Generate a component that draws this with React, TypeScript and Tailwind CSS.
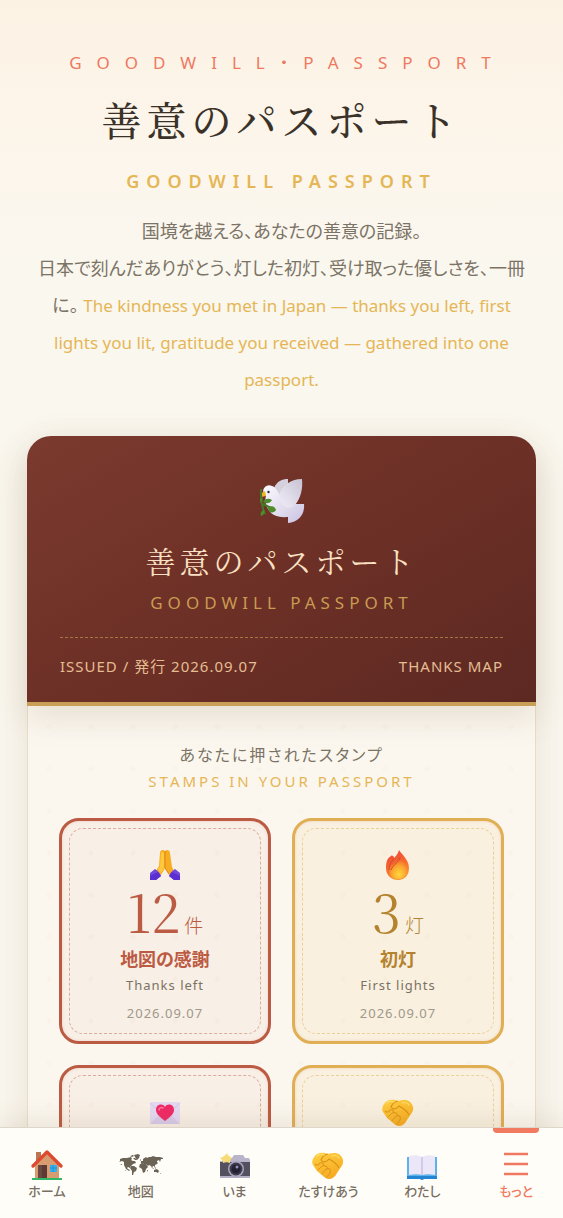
import type { ReactNode } from "react";
import clsx from "clsx";

const SANS = "font-['Noto_Sans','Noto_Sans_CJK_JP',sans-serif]";
const SERIF = "font-['Noto_Serif_CJK_JP','Liberation_Serif','Noto_Sans_CJK_JP',serif]";

function DoveIcon({ className }: { className: string }) {
  return (
    <svg viewBox="0 0 46 46" className={className} aria-hidden="true">
      <defs>
        <linearGradient id="dove-body" x1="0" y1="0" x2="1" y2="1">
          <stop offset="0" stopColor="#fbfaff" />
          <stop offset="0.6" stopColor="#dfdaec" />
          <stop offset="1" stopColor="#c9c0e4" />
        </linearGradient>
        <linearGradient id="dove-wing" x1="1" y1="0" x2="0" y2="1">
          <stop offset="0" stopColor="#c8c2d2" />
          <stop offset="1" stopColor="#f1eef8" />
        </linearGradient>
      </defs>
      <path d="M15 10C18 3 23 1 29 1v14L18 20Z" fill="#d5d0dc" />
      <path d="M4 13C5 8 9 6 13 8c4 1 5 5 8 9l16 9h8c1 10-5 18-16 19v-6c-12 1-18-3-21-10-2-5-2-8-1-11Z" fill="url(#dove-body)" />
      <path d="M20 17C23 8 31 1 43 1c1 9-1 19-7 26-3 4-8 3-12 0Z" fill="url(#dove-wing)" />
      <path d="M1 16l5-3 1 5-5 1Z" fill="#f2b327" />
      <circle cx="9.500" cy="14" r="1.200" fill="#332b2b" />
      <path d="M2 11v7c0 6 1 11 4 18M4 26l8 4" fill="none" stroke="#477827" strokeWidth="2" />
      <path d="M4 24c2-4 6-4 9-2-2 4-6 4-9 2Zm5 6c3-3 7-2 8 2-2 4-8 3-8-2Zm-4 2c-3 1-4 3-3 6 3-1 4-3 3-6ZM3 19c-2 1-3 3-1 6 2-2 2-4 1-6Z" fill="#4f8c2d" />
    </svg>
  );
}

function PrayIcon({ className }: { className: string }) {
  return (
    <svg viewBox="0 0 32 32" className={className} aria-hidden="true">
      <path d="M11 4c0-3 3-4 5-2 2-2 5-1 5 2l2 14 2 4-5 4-4-7-4 7-5-4 3-5Z" fill="#f7ad22" />
      <path d="M12 5c0-2 2-3 3-1v15l-3 5-3-3 2-4Z" fill="#ffc83d" />
      <path d="M16 2v17l4 6" fill="none" stroke="#de8517" />
      <path d="M6 20c3 2 5 4 6 7l-5 4H1v-7Z" fill="#7049dc" />
      <path d="M26 20c-3 2-5 4-6 7l5 4h6v-7Z" fill="#7049dc" />
      <path d="M1 27l8-4 3 4-5 4H1Zm30 0l-8-4-3 4 5 4h6Z" fill="#5b2fd0" />
    </svg>
  );
}

function FlameIcon({ className }: { className: string }) {
  return (
    <svg viewBox="0 0 32 32" className={className} aria-hidden="true">
      <defs>
        <linearGradient id="flame-outer" x1="0" y1="0" x2="0.4" y2="1">
          <stop offset="0" stopColor="#f0393d" />
          <stop offset="0.6" stopColor="#f66b2d" />
          <stop offset="1" stopColor="#fb932d" />
        </linearGradient>
        <radialGradient id="flame-core" cx="0.55" cy="0.8" r="0.7">
          <stop offset="0" stopColor="#ffd83c" />
          <stop offset="0.6" stopColor="#fba12e" />
          <stop offset="1" stopColor="#f26430" />
        </radialGradient>
      </defs>
      <path d="M17 1c2 4 10 9 10 18 0 8-5 12-11 12S4 27 4 19c0-5 1-10 5-12 1-1 3 0 3 2 2-2 4-4 5-8Z" fill="url(#flame-outer)" />
      <path d="M18 8c1 4 7 6 7 13 0 6-4 9-9 9s-9-3-9-8c0-6 8-7 11-14Z" fill="url(#flame-core)" />
      <path d="M12 9c-1 3-5 5-5 12M18 8c0 5-7 7-9 13" fill="none" stroke="#cf4a2b" />
    </svg>
  );
}

function LoveLetterIcon({ className }: { className: string }) {
  return (
    <svg viewBox="0 0 32 32" className={className} aria-hidden="true">
      <rect x="1" y="6" width="30" height="22" rx="1.500" fill="#e3d9f1" />
      <path d="M1 28l12-12h6l12 12Z" fill="#d8cbea" />
      <path d="M1 7l12 11h6L31 7" fill="none" stroke="#d5c9e6" />
      <path d="M16 25C11 21 7 18 7 14c0-6 7-7 9-3 2-4 9-3 9 3 0 4-4 7-9 11Z" fill="#f02a66" />
      <path d="M10 14c0-2 2-3 4-2" fill="none" stroke="#ff77a0" strokeWidth="1.500" strokeLinecap="round" />
    </svg>
  );
}

function HandshakeIcon({ className }: { className: string }) {
  return (
    <svg viewBox="0 0 32 32" className={className} aria-hidden="true">
      <defs>
        <linearGradient id="shake" x1="0" y1="0" x2="0.5" y2="1">
          <stop offset="0" stopColor="#ffd044" />
          <stop offset="1" stopColor="#f6ab22" />
        </linearGradient>
      </defs>
      <path d="M5 5c4-2 8-1 11 0 4-1 9-2 12 1 4 4 4 8 1 12l-4 6c-2 4-5 6-8 6s-5-2-7-4l-5-4-4-6C-1 13 1 8 5 5Z" fill="url(#shake)" />
      <path d="M16 5c-4 1-6 3-7 6 2 3 6 2 8-1 4 2 8 5 10 9" fill="none" stroke="#dc9118" strokeWidth="1.200" />
      <path d="M3 15c2 2 4 1 5-1 3-1 4 1 3 3 3-1 5 1 4 3 3-1 4 1 3 4" fill="none" stroke="#e39a1c" strokeWidth="1.200" />
      <path d="M6 21l4-4M10 25l4-5M15 28l3-4" stroke="#e0951a" strokeLinecap="round" />
      <path d="M5 7c2-2 5-2 7-1M20 7c3-1 6 0 7 2" fill="none" stroke="#ffe06a" strokeWidth="1.200" strokeLinecap="round" />
    </svg>
  );
}

function HouseIcon({ className }: { className: string }) {
  return (
    <svg viewBox="0 0 32 32" className={className} aria-hidden="true">
      <path d="M5 3h5v10H5Z" fill="#b97852" />
      <path d="M4 15L16 4l12 11v15H4Z" fill="#d79d70" />
      <path d="M7 16h9v13H7Z" fill="#6d4841" />
      <path d="M11 16h5v13h-5Z" fill="#5b3a36" />
      <path d="M19 16h7v7h-7Z" fill="#35aff0" />
      <path d="M22 16v7M19 19h7" stroke="#208fd4" />
      <path d="M2 17L16 3l14 14" fill="none" stroke="#dd4931" strokeWidth="3.200" strokeLinecap="round" strokeLinejoin="round" />
      <path d="M1 29h30v2H1Z" fill="#31b768" />
    </svg>
  );
}

function WorldMapIcon({ className }: { className: string }) {
  return (
    <svg viewBox="0 0 44 22" className={className} aria-hidden="true">
      <g fill="#6b6456">
        <path d="M1 5l3-1 4 0 4-1 1 2-1 1 2 1 2 0 1 2-3 1-2 2-1 1 0 1-2-1-1 1 1 1 2 1-1 1-3-2-2-4 0-3-2-1-3 1 1-1Z" />
        <path d="M11 2l3-1 1 1-2 1ZM14 4l2 0 2 2-2 0ZM15 1l4-1 2 1-1 3-2 2-2-3Z" />
        <path d="M12 12l3 0 3 2-1 3-2 1-1 3-1 0 0-4-2-3Z" />
        <path d="M22 8l0-1 2 0 0-2 3-2 1 1 2-1 2 0 2-1 3 1 4 0 3 1 0 1-2 0-1 3-1-2-2 1 0 3-2 1 0 3-1-2-1 0-1 2-1-2-2-1-1 1-2-2-2 0 0-1-2 1-1-1Z" />
        <path d="M21 10l3-1 3 1 2 3-2 2-1 3-2 1-1-4-3-2Z" />
        <path d="M35 16l3-1 2 2-1 2-2-1-2 0ZM33 13l2 2-1 0ZM36 13l1 1-1 1ZM41 19l1 1-1 0ZM28 16l1 0-1 2ZM38 8l1 1-1 1ZM21 5l1 1-1 1ZM1 10l2 0 0 1ZM6 16l1 0 0 1Z" />
      </g>
    </svg>
  );
}

function CameraIcon({ className }: { className: string }) {
  return (
    <svg viewBox="0 0 32 32" className={className} aria-hidden="true">
      <path d="M1 12h2l3-3h7l2-3h9l2 3h4l1 2v4H1Z" fill="#b9b4c9" />
      <path d="M1 13h30v15H1Z" fill="#535160" />
      <path d="M1 27h30v2H1Z" fill="#b4afc5" />
      <circle cx="17" cy="20" r="8" fill="#aaa5bd" />
      <circle cx="17" cy="20" r="6.500" fill="#3e3b4c" />
      <circle cx="17" cy="20" r="4.500" fill="#242233" />
      <circle cx="18" cy="18" r="1.500" fill="#9690b8" />
      <path d="M8 4c1 3 2 3 5 5-2 2-2 3-2 5-3-1-4-1-7 0 0-3-1-3-3-5 3-1 5-2 7-5Z" fill="#f7db78" />
    </svg>
  );
}

function BookIcon({ className }: { className: string }) {
  return (
    <svg viewBox="0 0 32 32" className={className} aria-hidden="true">
      <path d="M1 8h30v22H18l-2 1-2-1H1Z" fill="#5bb2ec" />
      <path d="M1 27h30v3H18l-2 1-2-1H1Z" fill="#2486d2" />
      <path d="M3 7c5-1 9-1 13 1 4-2 8-2 13-1v19c-5-1-9-1-13 0-4-1-8-1-13 0Z" fill="#ebe6f8" />
      <path d="M15 8h2v18h-2Z" fill="#d3c9e8" />
    </svg>
  );
}

function MenuIcon({ className }: { className: string }) {
  return (
    <svg viewBox="0 0 32 32" className={className} aria-hidden="true">
      <path d="M4 5h24M4 15h24M4 25h24" stroke="#ee7860" strokeWidth="2.500" />
    </svg>
  );
}

type StampProps = {
  tone: "red" | "gold";
  icon: ReactNode;
  count?: string;
  unit?: string;
  label?: string;
  english?: string;
  date?: string;
};

function Stamp({ tone, icon, count, unit, label, english, date }: StampProps) {
  const red = tone === "red";
  return (
    <article
      className={clsx(
        "h-[226px] rounded-[20px] border-[3px] p-[7px] shadow-[inset_0_0_3px_#e9a58a66]",
        red ? "border-[#bc5b43] bg-[#c060480d]" : "border-[#e0af54] bg-[#e5b44d17]",
      )}
    >
      <div
        className={clsx(
          "flex h-full flex-col items-center rounded-[14px] border border-dashed pt-5",
          red ? "border-[#bc5b4373] text-[#bc5b43]" : "border-[#e0af5480] text-[#b5832f]",
        )}
      >
        {icon}
        {count ? (
          <p className="flex h-[62px] items-baseline gap-1">
            <span className={clsx(SERIF, "text-[52px] leading-[60px]")}>{count}</span>
            <span className="text-[19px] font-light leading-none">{unit}</span>
          </p>
        ) : null}
        <h3 className="mt-1 text-[18px] font-bold leading-6">{label}</h3>
        <p className="mt-1 text-[13px] leading-5 tracking-[1px] text-[#7b7263]">{english}</p>
        <p className="mt-2 text-[13px] leading-5 tracking-[1px] text-[#a0988a]">{date}</p>
      </div>
    </article>
  );
}

const navItems = [
  { label: "ホーム", icon: <HouseIcon className="size-8" /> },
  { label: "地図", icon: <WorldMapIcon className="h-8 w-11" /> },
  { label: "いま", icon: <CameraIcon className="size-8" /> },
  { label: "たすけあう", icon: <HandshakeIcon className="size-8" /> },
  { label: "わたし", icon: <BookIcon className="size-8" /> },
  { label: "もっと", icon: <MenuIcon className="size-8" />, active: true },
];

export default function App() {
  return (
    <div
      lang="ja"
      className={clsx(
        SANS,
        "flex h-screen flex-col bg-[#faf7ef] text-[#7b7365] [font-feature-settings:'palt']",
      )}
    >
      <main className="min-h-0 flex-1 overflow-y-auto bg-[linear-gradient(180deg,#fcf2e4_0,#fdf5ea_120px,#faf7ef_260px)] px-[27px] pt-[51px] [scrollbar-width:none]">
        <header className="text-center">
          <p className="whitespace-nowrap pl-3 text-[17px] leading-6 tracking-[15px] text-[#ee7860]">
            GOODWILL・PASSPORT
          </p>
          <h1
            className={clsx(
              SERIF,
              "mt-3 text-[40px] font-medium leading-[64px] tracking-[5px] text-[#3a3229] [font-feature-settings:normal]",
            )}
          >
            善意のパスポート
          </h1>
          <p className="mt-[18px] text-[18px] font-semibold leading-6 tracking-[7px] text-[#e5b656]">
            GOODWILL PASSPORT
          </p>
          <p className="mt-5 px-2 text-[18px] leading-[37px]">
            国境を越える、あなたの善意の記録。
            <br />
            日本で刻んだありがとう、灯した初灯、受け取った優しさを、一冊に。{" "}
            <span lang="en" className="text-[17px] text-[#e5b656]">
              The kindness you met in Japan — thanks you left, first lights you lit, gratitude you
              received — gathered into one passport.
            </span>
          </p>
        </header>

        <section className="mt-[38px] rounded-t-3xl shadow-[0_12px_40px_#785a321f]">
          <div className="relative rounded-t-3xl border-b-4 border-[#c99f58] bg-[linear-gradient(150deg,#7b3a2e_0%,#6d3026_50%,#5c2922_100%)] px-[33px] pb-6 pt-[42px] text-center shadow-[0_12px_32px_#785a3226]">
            <DoveIcon className="mx-auto size-[46px]" />
            <h2
              className={clsx(
                SERIF,
                "mt-3 text-[30px] leading-[48px] tracking-[4px] text-[#fae1c3] [font-feature-settings:normal]",
              )}
            >
              善意のパスポート
            </h2>
            <p className="mt-[5px] text-[17px] leading-7 tracking-[5px] text-[#c99b52]">
              GOODWILL PASSPORT
            </p>
            <div className="mt-5 flex justify-between border-t border-dashed border-[#c99f58a0] pt-4 text-[15px] leading-6 tracking-[1px] text-[#e5bd93]">
              <span>ISSUED / 発行 2026.09.07</span>
              <span>THANKS MAP</span>
            </div>
          </div>

          <div className="border-x border-[#e8dcc8] bg-[#fbf7ef] bg-[radial-gradient(circle,#d8a0500a_2px,transparent_3px)] bg-[size:42px_42px] px-[31px] pb-8 pt-9">
            <h2 className="text-center text-[16px] leading-[26px] tracking-[2px]">
              あなたに押されたスタンプ
              <span className="block text-[15px] font-normal tracking-[3px] text-[#e5b656]">
                STAMPS IN YOUR PASSPORT
              </span>
            </h2>
            <div className="mt-6 grid grid-cols-2 gap-[21px]">
              <Stamp
                tone="red"
                icon={<PrayIcon className="size-8" />}
                count="12"
                unit="件"
                label="地図の感謝"
                english="Thanks left"
                date="2026.09.07"
              />
              <Stamp
                tone="gold"
                icon={<FlameIcon className="size-8" />}
                count="3"
                unit="灯"
                label="初灯"
                english="First lights"
                date="2026.09.07"
              />
              <Stamp tone="red" icon={<LoveLetterIcon className="size-8" />} />
              <Stamp tone="gold" icon={<HandshakeIcon className="size-8" />} />
            </div>
          </div>
        </section>
      </main>

      <nav className="relative grid grid-cols-6 border-t border-[#ded6c8] bg-[#fffdf8] shadow-[0_-6px_24px_#785a321f]">
        {navItems.map((item) => (
          <a
            key={item.label}
            href="#"
            aria-current={item.active ? "page" : undefined}
            className="flex h-[90px] flex-col items-center"
          >
            <span className={clsx("h-[5px] w-[46px] rounded-b", item.active && "bg-[#f07b61]")} />
            <span className="mt-4">{item.icon}</span>
            <span
              className={clsx(
                "text-[13px] font-medium leading-5",
                item.active ? "text-[#f07b61]" : "text-[#776f61]",
              )}
            >
              {item.label}
            </span>
          </a>
        ))}
      </nav>
    </div>
  );
}
